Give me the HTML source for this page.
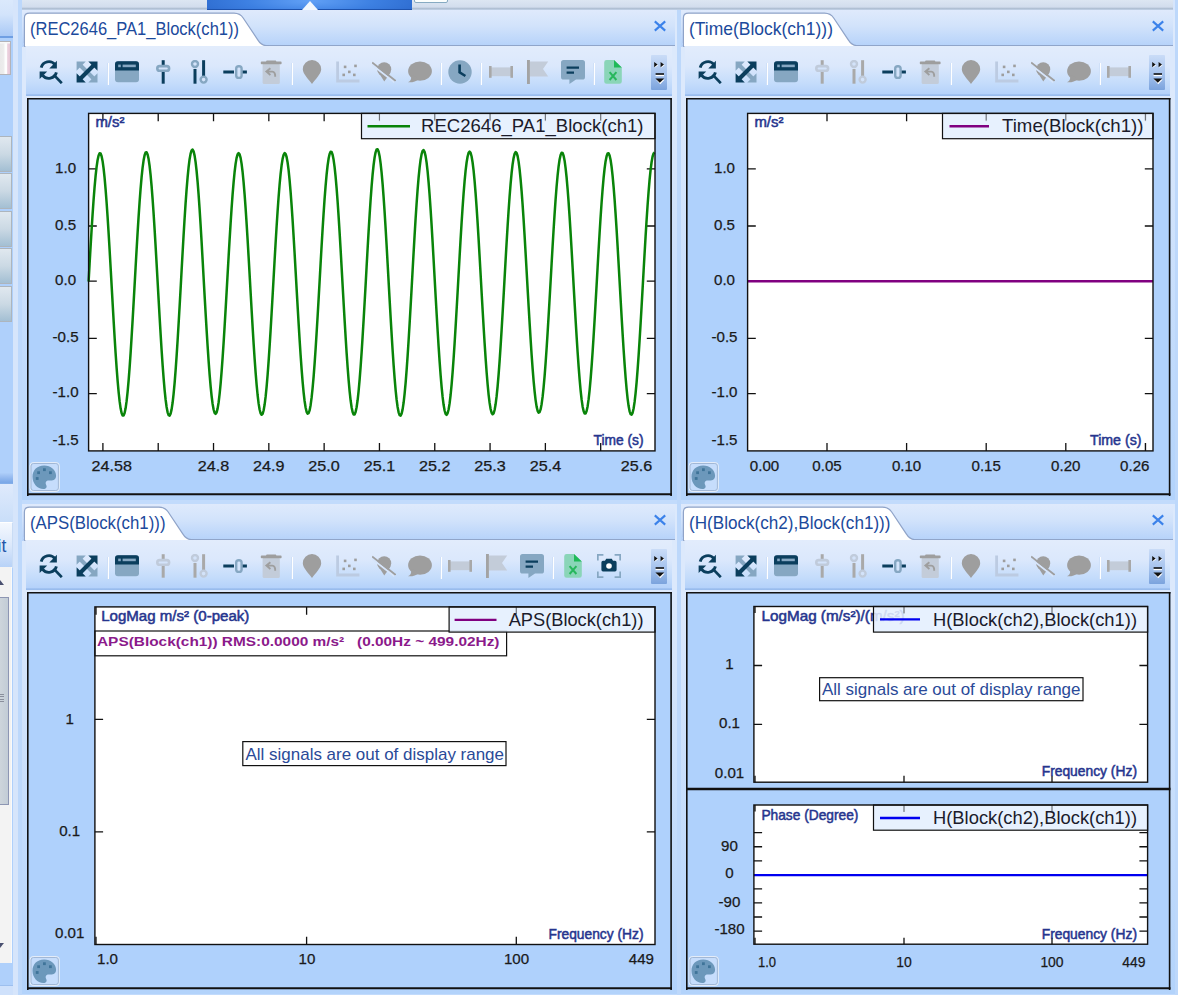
<!DOCTYPE html>
<html><head><meta charset="utf-8"><title>Signal display</title>
<style>
html,body{margin:0;padding:0}
body{width:1178px;height:995px;position:relative;overflow:hidden;background:#d6e5fb;font-family:"Liberation Sans",sans-serif}
div,svg{position:absolute}
#left{left:0;top:0;width:13px;height:995px;background:#afd0fb;overflow:hidden}
.lg1{left:0;top:0;width:13px;height:36px;background:linear-gradient(#dbe9fc,#d3e4fb 40%,#a9c9f6)}
.lline1{left:0;top:35.8px;width:13px;height:2.2px;background:#6f9fe3}
.lbox{left:-3px;top:41px;width:11.8px;height:32.4px;background:linear-gradient(90deg,#e8e8e8 0,#ececec 45%,#fdfdfd 62%,#fdfdfd 72%,#ecd3df 80%,#e6c6d6 100%);border:1.4px solid #b3b3b8;box-shadow:inset 0 1.5px 0 #f8f8f8}
.lbtn{left:-1px;width:11px;height:34px;border:1px solid #adb5bd;background:linear-gradient(#e0e8ef,#cbd9e4 50%,#a3bfd3)}
.lline2{left:0;top:472.5px;width:13px;height:11.5px;background:linear-gradient(#aecef9,#96bbf0 40%,#7ba8e7 85%,#86b0ea)}
.lg2{left:0;top:484px;width:13px;height:38px;background:linear-gradient(#dfeafc,#c9def9)}
.lhead{left:0;top:521.5px;width:11.6px;height:45.6px;border-top:1px solid #fff;background:linear-gradient(#f4f8fe,#dbe8fb 50%,#b6d1f7);border-right:1px solid #c9dcf5;color:#2456a8;font-size:17.5px;overflow:hidden}
.lhead span{position:absolute;left:-2.4px;top:13.5px}
.lscroll{left:0;top:567px;width:11px;height:396px;background:#f3f3f3;border-right:1px solid #fafafa}
.thumb{left:-2px;top:30px;width:9px;height:206px;background:linear-gradient(90deg,#cfd6dc,#c2ccd6);border:1.2px solid #8d96b3}
.grip{left:0;top:127px;width:4px;height:9px;background:repeating-linear-gradient(#8a8f9c 0 1px,transparent 1px 2.4px)}
.arru{left:-4px;top:13px;border:4.5px solid transparent;border-bottom:5px solid #4a5070;border-top:none}
.arrd{left:-4.5px;top:375.5px;border:4.5px solid transparent;border-top:5px solid #4a5070;border-bottom:none}
.lbot{left:0;top:985px;width:13px;height:10px;background:#cfe1fb;border-top:1px solid #9dbfee}
.vs{top:0;width:4px;height:995px;background:#bdd8fb}
.topbar{left:22px;top:0;width:1151px;height:10px;background:linear-gradient(#dce6f2,#d2dded 70%,#a9bace 88%,#c9d9ef)}
.bluebar{left:206.8px;top:0;width:205.4px;height:9.4px;background:radial-gradient(ellipse 62% 260% at 50% 10%,#62a1f6,#3d80e2 50%,#2a67cb 100%);border-bottom:1.2px solid #1d52ad}
.tri{left:301.5px;top:0.8px;border-left:8.7px solid transparent;border-right:8.7px solid transparent;border-bottom:9.7px solid #f3f8fe}
.smallbox{left:414px;top:-3px;width:32px;height:4px;background:#fbfefd;border:1.1px solid #86aac2;border-radius:2px}
.panel{height:494px;background:linear-gradient(to bottom,#dce9fc 0,#dce9fc 88px,#b3d3fb 487px,#b3d3fb 489.5px,#c2dbfc 489.6px)}
.tabstrip{left:0;top:0;right:2px;height:35px;background:linear-gradient(#dfeafc,#d2e3fb 45%,#b7d3fa);border-bottom:1.4px solid #90a5ca}
.tabsvg{left:0;top:0}
.tabtitle{font-size:17.8px;fill:#1c4a9c}
.closex{top:10px}
.toolbar{left:4px;top:36px;right:5px;height:50px;background:linear-gradient(#e2ecfc,#dbe8fc 40%,#c4dcfb 75%,#b5d2fa 95%,#92b7eb 98.5%,#a6c5f0 100%)}
.ic{top:14px}
.sep{top:17px;width:1px;height:22px;background:#fff;border-left:1px solid #cfe0f8}
.ovf{top:8.5px;width:16.5px;height:35px;background:linear-gradient(#cadcf7,#a9c5ee 50%,#7ba3dd);border-radius:1px}
.ovf svg{left:0;top:0}
.chart{overflow:hidden}
.tk{font-size:15.1px;fill:#1a1a1a;stroke:#1a1a1a;stroke-width:0.25px}
.leg{font-size:18.4px;fill:#1b1b2b}
.leg2{font-size:18.4px;fill:#1b1b2b}
.ax{font-size:14px;fill:#26358e;stroke:#26358e;stroke-width:0.5px}
.ax2{font-size:13.9px;fill:#26358e;stroke:#26358e;stroke-width:0.5px}
.rms{font-size:13.5px;font-weight:bold;fill:#8b1a8b;white-space:pre}
.msg{font-size:17px;fill:#2a4a98}
</style></head><body>
<div id="left"><div class="lg1"></div><div class="lline1"></div><div class="lbox"></div><div class="lbtn" style="top:135.5px"></div><div class="lbtn" style="top:173.1px"></div><div class="lbtn" style="top:210.7px"></div><div class="lbtn" style="top:248.3px"></div><div class="lbtn" style="top:285.9px"></div><div class="lline2"></div><div class="lg2"></div><div class="lhead"><span>it</span></div><div class="lscroll"><div class="thumb"></div><div class="grip"></div><div class="arru"></div><div class="arrd"></div></div><div class="lbot"></div></div>
<div class="vs" style="left:18px"></div>
<div class="vs" style="left:677px"></div>
<div class="vs" style="left:1175px"></div>
<div class="topbar"></div>
<div class="bluebar"></div><div class="tri"></div><div class="smallbox"></div>

<div class="panel" style="left:22px;top:10px;width:655px">
 <div class="tabstrip"></div>
 <svg class="tabsvg" width="247" height="37" viewBox="0 0 247 37">
  <path d="M2.4 37 L2.4 8 Q2.4 3.2 7.5 3.2 L212 3.2 Q218.2 3.4 221.2 8 L235.6 29.6 Q239 35.2 244 35.6 L247 35.6 L247 37 Z" fill="#fff" stroke="#8fa3c8" stroke-width="1.2"/>
  <rect x="0" y="33" width="1.8" height="4" fill="#b9d4fa"/>
  <text x="8" y="24.8" class="tabtitle" textLength="209" lengthAdjust="spacingAndGlyphs">(REC2646_PA1_Block(ch1))</text>
 </svg>
 <svg class="closex" style="left:632px" width="12" height="12" viewBox="0 0 12 12"><path d="M0.8 1.4 L11.2 10.6 M11.2 1.4 L0.8 10.6" stroke="#3b82ea" stroke-width="2.1"/></svg>
 <div class="toolbar"><svg class="ic" style="left:12.5px" width="24" height="24" viewBox="0 0 24 24">
<path d="M2.2 7.6 A7.9 7.9 0 0 1 16 4.6" fill="none" stroke="#0b3e5d" stroke-width="2.9"/>
<path d="M17.9 0.7 L17.9 8.5 L10.3 8.5 Z" fill="#0b3e5d"/>
<path d="M17.4 12.4 A7.9 7.9 0 0 1 3.6 15.4" fill="none" stroke="#0b3e5d" stroke-width="2.9"/>
<path d="M0.6 19 L0.6 11.5 L8.2 11.5 Z" fill="#0b3e5d"/>
<path d="M14.6 14.6 L22.8 23.2" stroke="#0b3e5d" stroke-width="2.7" fill="none"/></svg>
<svg class="ic" style="left:48.5px" width="24" height="24" viewBox="0 0 24 24">
<path d="M1.6 1.6 L10.8 1.6 L1.6 10.8 Z M22.5 22.4 L13.3 22.4 L22.5 13.2 Z" fill="#86a7c2"/>
<path d="M5 5 L19 19" stroke="#86a7c2" stroke-width="4"/>
<path d="M22.5 1.6 L13.3 1.6 L22.5 10.8 Z M1.6 22.4 L10.8 22.4 L1.6 13.2 Z" fill="#0b3e5d"/>
<path d="M19 5 L5 19" stroke="#0b3e5d" stroke-width="4"/></svg>
<div class="sep" style="left:80.7px"></div>
<svg class="ic" style="left:89.0px" width="24" height="24" viewBox="0 0 24 24">
<rect x="0" y="1.3" width="24" height="21" rx="3" fill="#86a7c2"/>
<path d="M0 10.5 L0 4.3 A3 3 0 0 1 3 1.3 L21 1.3 A3 3 0 0 1 24 4.3 L24 10.5 Z" fill="#0b3e5d"/>
<rect x="3.2" y="4.6" width="2.6" height="2.6" fill="#86a7c2"/>
<rect x="7.6" y="4.6" width="13.2" height="2.6" fill="#86a7c2"/></svg>
<svg class="ic" style="left:125.0px" width="24" height="24" viewBox="0 0 24 24">
<path d="M12.2 0.2 L12.2 23.7" stroke="#0b3e5d" stroke-width="3"/>
<rect x="6.3" y="6.1" width="11.8" height="4.6" rx="2.3" fill="#d3e3fa" stroke="#86a7c2" stroke-width="2.6"/></svg>
<svg class="ic" style="left:161.0px" width="24" height="24" viewBox="0 0 24 24">
<path d="M8 9 L8 23.7" stroke="#0b3e5d" stroke-width="3"/>
<circle cx="8" cy="4" r="3" fill="#d3e3fa" stroke="#86a7c2" stroke-width="2.4"/>
<path d="M16.6 0.2 L16.6 16" stroke="#0b3e5d" stroke-width="3"/>
<circle cx="16.6" cy="19.6" r="3" fill="#d3e3fa" stroke="#86a7c2" stroke-width="2.4"/></svg>
<svg class="ic" style="left:197.0px" width="24" height="24" viewBox="0 0 24 24">
<path d="M0.3 12 L11 12 M19 12 L23.9 12" stroke="#0b3e5d" stroke-width="3"/>
<rect x="13.2" y="6.3" width="5.4" height="11.6" rx="2.5" fill="#d3e3fa" stroke="#86a7c2" stroke-width="2.4"/></svg>
<svg class="ic" style="left:233.0px" width="24" height="24" viewBox="0 0 24 24">
<rect x="3.6" y="3.4" width="17.2" height="20.5" rx="1.5" fill="#c3ccd9"/>
<path d="M7.6 0.4 L16.8 0.4 L17.6 2.2 L6.8 2.2 Z" fill="#9e9e9e"/>
<rect x="1.8" y="1.6" width="20.8" height="2.7" rx="0.8" fill="#9e9e9e"/>
<path d="M11.4 8.2 L7.4 11.6 L11.4 15 M7.6 11.6 L13.2 11.6 Q16.4 11.8 16.2 16.8" fill="none" stroke="#9e9e9e" stroke-width="1.9"/></svg>
<div class="sep" style="left:265.2px"></div>
<svg class="ic" style="left:273.5px" width="24" height="24" viewBox="0 0 24 24">
<path d="M12 24 C9 19.5 2.8 14 2.8 9.2 A9.2 9.2 0 0 1 21.2 9.2 C21.2 14 15 19.5 12 24 Z" fill="#9e9e9e"/></svg>
<svg class="ic" style="left:309.5px" width="24" height="24" viewBox="0 0 24 24">
<path d="M1.6 1.6 L1.6 21 L23.4 21" fill="none" stroke="#bccbe2" stroke-width="2.8"/>
<rect x="7.8" y="5.6" width="2.6" height="2.6" fill="#9e9e9e"/>
<rect x="18.2" y="4.6" width="2.6" height="2.6" fill="#9e9e9e"/>
<rect x="12" y="10.6" width="2.6" height="2.6" fill="#9e9e9e"/>
<rect x="6.4" y="13.6" width="2.6" height="2.6" fill="#9e9e9e"/>
<rect x="17" y="13.6" width="2.6" height="2.6" fill="#9e9e9e"/></svg>
<svg class="ic" style="left:345.5px" width="24" height="24" viewBox="0 0 24 24">
<circle cx="12.2" cy="9.3" r="7" fill="#9e9e9e"/>
<path d="M5.3 10.6 L12.3 21.6 L18.6 12.6 Z" fill="#9e9e9e"/>
<path d="M-1 3.9 L22.4 22.2" stroke="#d6e5fb" stroke-width="1.9"/>
<path d="M0.1 2.5 L23.5 20.8" stroke="#9e9e9e" stroke-width="1.8"/></svg>
<svg class="ic" style="left:381.5px" width="24" height="24" viewBox="0 0 24 24">
<ellipse cx="12" cy="11.1" rx="11.9" ry="9.7" fill="#9e9e9e"/>
<path d="M3.6 15 Q3.8 20.4 0 22.3 Q6.6 22.8 11 19 Z" fill="#9e9e9e"/></svg>
<div class="sep" style="left:413.7px"></div>
<svg class="ic" style="left:422.0px" width="24" height="24" viewBox="0 0 24 24">
<circle cx="12" cy="12" r="11.7" fill="#86a7c2"/>
<path d="M11.6 4.6 L11.6 12.4 L17.4 16" fill="none" stroke="#0b3e5d" stroke-width="2.6"/></svg>
<div class="sep" style="left:454.2px"></div>
<svg class="ic" style="left:462.5px" width="24" height="24" viewBox="0 0 24 24">
<rect x="1" y="7.4" width="22" height="8.8" fill="#c3ccd9"/>
<rect x="0" y="6" width="2.6" height="11.8" fill="#a8a8a8"/>
<rect x="21.4" y="6" width="2.6" height="11.8" fill="#a8a8a8"/></svg>
<svg class="ic" style="left:498.5px" width="24" height="24" viewBox="0 0 24 24">
<path d="M4.6 1.6 L23.2 1.6 L18 9 L23.2 16.4 L4.6 16.4 Z" fill="#c3ccd9"/>
<rect x="2" y="0" width="2.9" height="24" fill="#a3a3a3"/></svg>
<svg class="ic" style="left:534.5px" width="24" height="24" viewBox="0 0 24 24">
<path d="M2.6 0 L21.4 0 A2.6 2.6 0 0 1 24 2.6 L24 17 A2.6 2.6 0 0 1 21.4 19.6 L15 19.6 L8.4 24 L8.4 19.6 L2.6 19.6 A2.6 2.6 0 0 1 0 17 L0 2.6 A2.6 2.6 0 0 1 2.6 0 Z" fill="#86a7c2"/>
<path d="M5.6 7.6 L18 7.6 M5.6 12.6 L13 12.6" stroke="#0b3e5d" stroke-width="2.2"/></svg>
<div class="sep" style="left:566.7px"></div>
<svg class="ic" style="left:575.0px" width="24" height="24" viewBox="0 0 24 24">
<path d="M5.6 0 L13 0 L20.8 7.6 L20.8 21.4 A2.4 2.4 0 0 1 18.4 23.8 L5.6 23.8 A2.4 2.4 0 0 1 3.2 21.4 L3.2 2.4 A2.4 2.4 0 0 1 5.6 0 Z" fill="#8ad5b8"/>
<path d="M13 0 L20.8 7.6 L13 7.6 Z" fill="#1fba58"/>
<path d="M8.6 12.2 L15.4 20 M15.4 12.2 L8.6 20" stroke="#27b75c" stroke-width="2"/></svg>
<div class="ovf" style="left:624.7px"><svg width="17" height="36" viewBox="0 0 17 36">
<path d="M3.8 7.6 L7.2 10.2 L3.8 12.8 Z M10.2 7.6 L13.6 10.2 L10.2 12.8 Z" fill="#fff"/><path d="M3.2 7 L6.6 9.6 L3.2 12.2 Z M9.6 7 L13 9.6 L9.6 12.2 Z" fill="#111"/>
<path d="M4.6 20.4 L13 20.4" stroke="#fff" stroke-width="1.6"/>
<path d="M4.6 19 L13 19" stroke="#111" stroke-width="1.6"/>
<path d="M4.9 24.6 L13.7 24.6 L9.3 29.2 Z" fill="#fff"/>
<path d="M4.4 23.4 L13.2 23.4 L8.8 27.8 Z" fill="#111"/>
</svg></div></div>
 <svg class="chart" style="left:5px;top:88px" width="645" height="398" viewBox="0 0 645 398">
<rect x="0" y="0" width="645" height="398" fill="#afd1fc"/>
<rect x="61.6" y="15.4" width="566.4" height="337.5" fill="#fff"/>
<path d="M61.6 70.9 h8.2 M628 70.9 h-8.2 M61.6 128.0 h8.2 M628 128.0 h-8.2 M61.6 183.2 h8.2 M628 183.2 h-8.2 M61.6 240.4 h8.2 M628 240.4 h-8.2 M61.6 295.6 h8.2 M628 295.6 h-8.2 M75.9 15.4 v7.8 M75.9 352.9 v-7.8 M131.21 15.4 v7.8 M131.21 352.9 v-7.8 M186.52 15.4 v7.8 M186.52 352.9 v-7.8 M241.83 15.4 v7.8 M241.83 352.9 v-7.8 M297.14 15.4 v7.8 M297.14 352.9 v-7.8 M352.45000000000005 15.4 v7.8 M352.45000000000005 352.9 v-7.8 M407.76 15.4 v7.8 M407.76 352.9 v-7.8 M463.07000000000005 15.4 v7.8 M463.07000000000005 352.9 v-7.8 M518.38 15.4 v7.8 M518.38 352.9 v-7.8 M573.69 15.4 v7.8 M573.69 352.9 v-7.8" stroke="#111" stroke-width="1.3" fill="none"/>
<path d="M61.6 183.5 L62.6 165.8 L63.6 148.4 L64.6 131.7 L65.6 116.1 L66.6 101.7 L67.6 88.9 L68.6 77.9 L69.6 68.9 L70.6 62.0 L71.6 57.5 L72.6 55.3 L73.6 55.5 L74.6 58.2 L75.6 63.2 L76.6 70.5 L77.6 79.9 L78.6 91.3 L79.6 104.5 L80.6 119.1 L81.6 135.0 L82.6 151.8 L83.6 169.3 L84.6 187.1 L85.6 204.9 L86.6 222.4 L87.6 239.2 L88.6 255.1 L89.6 269.6 L90.6 282.7 L91.6 293.9 L92.6 303.2 L93.6 310.3 L94.6 315.1 L95.6 317.5 L96.6 317.5 L97.6 315.1 L98.6 310.3 L99.6 303.2 L100.6 293.9 L101.6 282.7 L102.6 269.6 L103.6 255.1 L104.6 239.2 L105.6 222.4 L106.6 204.9 L107.6 187.1 L108.6 169.2 L109.6 151.6 L110.6 134.6 L111.6 118.6 L112.6 103.8 L113.6 90.6 L114.6 79.1 L115.6 69.6 L116.6 62.3 L117.6 57.2 L118.6 54.5 L119.6 54.3 L120.6 56.5 L121.6 61.1 L122.6 68.0 L123.6 77.1 L124.6 88.2 L125.6 101.1 L126.6 115.5 L127.6 131.3 L128.6 148.1 L129.6 165.6 L130.6 183.5 L131.6 201.4 L132.6 219.0 L133.6 235.9 L134.6 252.0 L135.6 266.8 L136.6 280.2 L137.6 291.8 L138.6 301.5 L139.6 309.0 L140.6 314.3 L141.6 317.2 L142.6 317.7 L143.6 315.7 L144.6 311.4 L145.6 304.8 L146.6 295.9 L147.6 285.1 L148.6 272.4 L149.6 258.1 L150.6 242.5 L151.6 225.8 L152.6 208.5 L153.6 190.7 L154.6 172.5 L155.6 154.5 L156.6 137.0 L157.6 120.5 L158.6 105.2 L159.6 91.3 L160.6 79.3 L161.6 69.2 L162.6 61.2 L163.6 55.6 L164.6 52.4 L165.6 51.6 L166.6 53.4 L167.6 57.6 L168.6 64.1 L169.6 73.0 L170.6 83.9 L171.6 96.7 L172.6 111.1 L173.6 127.0 L174.6 143.9 L175.6 161.6 L176.6 179.8 L177.6 197.6 L178.6 215.0 L179.6 231.9 L180.6 247.9 L181.6 262.8 L182.6 276.3 L183.6 288.1 L184.6 298.0 L185.6 305.9 L186.6 311.5 L187.6 314.8 L188.6 315.8 L189.6 314.4 L190.6 310.6 L191.6 304.5 L192.6 296.2 L193.6 285.9 L194.6 273.7 L195.6 259.9 L196.6 244.8 L197.6 228.6 L198.6 211.6 L199.6 194.1 L200.6 176.4 L201.6 158.8 L202.6 141.6 L203.6 125.3 L204.6 110.2 L205.6 96.4 L206.6 84.3 L207.6 74.0 L208.6 65.9 L209.6 59.9 L210.6 56.3 L211.6 55.1 L212.6 56.3 L213.6 59.9 L214.6 65.9 L215.6 74.0 L216.6 84.3 L217.6 96.4 L218.6 110.2 L219.6 125.3 L220.6 141.6 L221.6 158.8 L222.6 176.4 L223.6 194.2 L224.6 211.8 L225.6 228.9 L226.6 245.3 L227.6 260.5 L228.6 274.4 L229.6 286.6 L230.6 297.0 L231.6 305.4 L232.6 311.5 L233.6 315.3 L234.6 316.8 L235.6 315.8 L236.6 312.5 L237.6 306.8 L238.6 298.9 L239.6 288.9 L240.6 277.0 L241.6 263.4 L242.6 248.4 L243.6 232.3 L244.6 215.3 L245.6 197.7 L246.6 180.0 L247.6 162.3 L248.6 145.0 L249.6 128.5 L250.6 113.1 L251.6 99.0 L252.6 86.5 L253.6 75.9 L254.6 67.3 L255.6 60.9 L256.6 56.8 L257.6 55.1 L258.6 55.9 L259.6 59.0 L260.6 64.5 L261.6 72.2 L262.6 82.1 L263.6 93.8 L264.6 107.3 L265.6 122.2 L266.6 138.3 L267.6 155.3 L268.6 172.9 L269.6 190.6 L270.6 208.1 L271.6 225.2 L272.6 241.6 L273.6 257.0 L274.6 271.1 L275.6 283.6 L276.6 294.3 L277.6 303.0 L278.6 309.5 L279.6 313.8 L280.6 315.7 L281.6 315.2 L282.6 312.4 L283.6 307.2 L284.6 299.7 L285.6 290.2 L286.6 278.8 L287.6 265.6 L288.6 251.0 L289.6 235.2 L290.6 218.5 L291.6 201.1 L292.6 183.5 L293.6 165.5 L294.6 148.0 L295.6 131.1 L296.6 115.3 L297.6 100.7 L298.6 87.8 L299.6 76.6 L300.6 67.5 L301.6 60.6 L302.6 56.0 L303.6 53.8 L304.6 54.0 L305.6 56.7 L306.6 61.8 L307.6 69.2 L308.6 78.7 L309.6 90.2 L310.6 103.5 L311.6 118.3 L312.6 134.4 L313.6 151.4 L314.6 169.1 L315.6 187.1 L316.6 204.8 L317.6 222.1 L318.6 238.8 L319.6 254.6 L320.6 269.0 L321.6 281.9 L322.6 293.1 L323.6 302.3 L324.6 309.3 L325.6 314.1 L326.6 316.5 L327.6 316.5 L328.6 314.1 L329.6 309.3 L330.6 302.3 L331.6 293.1 L332.6 281.9 L333.6 269.0 L334.6 254.6 L335.6 238.8 L336.6 222.1 L337.6 204.8 L338.6 187.1 L339.6 168.8 L340.6 150.8 L341.6 133.4 L342.6 117.1 L343.6 102.0 L344.6 88.4 L345.6 76.7 L346.6 67.0 L347.6 59.5 L348.6 54.3 L349.6 51.5 L350.6 51.3 L351.6 53.5 L352.6 58.2 L353.6 65.3 L354.6 74.6 L355.6 85.9 L356.6 99.1 L357.6 113.9 L358.6 130.1 L359.6 147.3 L360.6 165.2 L361.6 183.4 L362.6 201.4 L363.6 219.0 L364.6 235.9 L365.6 252.0 L366.6 266.8 L367.6 280.2 L368.6 291.8 L369.6 301.5 L370.6 309.0 L371.6 314.3 L372.6 317.2 L373.6 317.7 L374.6 315.7 L375.6 311.4 L376.6 304.8 L377.6 295.9 L378.6 285.1 L379.6 272.4 L380.6 258.1 L381.6 242.5 L382.6 225.8 L383.6 208.5 L384.6 190.7 L385.6 172.5 L386.6 154.6 L387.6 137.2 L388.6 120.7 L389.6 105.5 L390.6 91.7 L391.6 79.7 L392.6 69.6 L393.6 61.7 L394.6 56.1 L395.6 52.9 L396.6 52.1 L397.6 53.9 L398.6 58.1 L399.6 64.6 L400.6 73.4 L401.6 84.3 L402.6 97.0 L403.6 111.4 L404.6 127.2 L405.6 144.1 L406.6 161.7 L407.6 179.8 L408.6 197.7 L409.6 215.3 L410.6 232.3 L411.6 248.4 L412.6 263.4 L413.6 277.0 L414.6 288.9 L415.6 298.9 L416.6 306.8 L417.6 312.5 L418.6 315.8 L419.6 316.8 L420.6 315.3 L421.6 311.5 L422.6 305.4 L423.6 297.0 L424.6 286.6 L425.6 274.4 L426.6 260.5 L427.6 245.3 L428.6 228.9 L429.6 211.8 L430.6 194.2 L431.6 176.3 L432.6 158.5 L433.6 141.1 L434.6 124.6 L435.6 109.3 L436.6 95.4 L437.6 83.1 L438.6 72.7 L439.6 64.5 L440.6 58.5 L441.6 54.8 L442.6 53.6 L443.6 54.8 L444.6 58.5 L445.6 64.5 L446.6 72.7 L447.6 83.1 L448.6 95.4 L449.6 109.3 L450.6 124.6 L451.6 141.1 L452.6 158.5 L453.6 176.3 L454.6 194.2 L455.6 211.7 L456.6 228.8 L457.6 245.0 L458.6 260.2 L459.6 274.0 L460.6 286.2 L461.6 296.6 L462.6 304.9 L463.6 311.0 L464.6 314.8 L465.6 316.3 L466.6 315.3 L467.6 312.0 L468.6 306.3 L469.6 298.4 L470.6 288.5 L471.6 276.6 L472.6 263.1 L473.6 248.2 L474.6 232.1 L475.6 215.1 L476.6 197.7 L477.6 179.9 L478.6 162.1 L479.6 144.7 L480.6 128.1 L481.6 112.5 L482.6 98.3 L483.6 85.8 L484.6 75.1 L485.6 66.4 L486.6 60.0 L487.6 55.9 L488.6 54.1 L489.6 54.9 L490.6 58.0 L491.6 63.6 L492.6 71.4 L493.6 81.3 L494.6 93.1 L495.6 106.7 L496.6 121.7 L497.6 137.9 L498.6 155.1 L499.6 172.7 L500.6 190.6 L501.6 208.0 L502.6 224.9 L503.6 241.2 L504.6 256.5 L505.6 270.4 L506.6 282.8 L507.6 293.4 L508.6 302.1 L509.6 308.6 L510.6 312.8 L511.6 314.7 L512.6 314.2 L513.6 311.4 L514.6 306.2 L515.6 298.9 L516.6 289.4 L517.6 278.1 L518.6 265.0 L519.6 250.5 L520.6 234.8 L521.6 218.2 L522.6 201.0 L523.6 183.5 L524.6 165.7 L525.6 148.3 L526.6 131.5 L527.6 115.8 L528.6 101.4 L529.6 88.5 L530.6 77.5 L531.6 68.4 L532.6 61.5 L533.6 57.0 L534.6 54.8 L535.6 55.0 L536.6 57.7 L537.6 62.7 L538.6 70.1 L539.6 79.5 L540.6 91.0 L541.6 104.1 L542.6 118.9 L543.6 134.8 L544.6 151.7 L545.6 169.2 L546.6 187.1 L547.6 204.6 L548.6 221.9 L549.6 238.4 L550.6 254.0 L551.6 268.4 L552.6 281.2 L553.6 292.3 L554.6 301.4 L555.6 308.4 L556.6 313.1 L557.6 315.5 L558.6 315.5 L559.6 313.1 L560.6 308.4 L561.6 301.4 L562.6 292.3 L563.6 281.2 L564.6 268.4 L565.6 254.0 L566.6 238.4 L567.6 221.9 L568.6 204.6 L569.6 187.1 L570.6 169.3 L571.6 151.8 L572.6 135.0 L573.6 119.1 L574.6 104.5 L575.6 91.3 L576.6 79.9 L577.6 70.5 L578.6 63.2 L579.6 58.2 L580.6 55.5 L581.6 55.3 L582.6 57.5 L583.6 62.0 L584.6 68.9 L585.6 77.9 L586.6 88.9 L587.6 101.7 L588.6 116.1 L589.6 131.7 L590.6 148.4 L591.6 165.8 L592.6 183.5 L593.6 201.3 L594.6 218.7 L595.6 235.6 L596.6 251.5 L597.6 266.2 L598.6 279.5 L599.6 291.0 L600.6 300.6 L601.6 308.1 L602.6 313.3 L603.6 316.2 L604.6 316.7 L605.6 314.8 L606.6 310.5 L607.6 303.9 L608.6 295.1 L609.6 284.3 L610.6 271.7 L611.6 257.6 L612.6 242.1 L613.6 225.5 L614.6 208.3 L615.6 190.6 L616.6 172.8 L617.6 155.2 L618.6 138.1 L619.6 122.0 L620.6 107.0 L621.6 93.5 L622.6 81.7 L623.6 71.8 L624.6 64.0 L625.6 58.5 L626.6 55.4 L627.6 54.6" fill="none" stroke="#098409" stroke-width="2.5" stroke-linejoin="round"/>
<rect x="334.5" y="15.4" width="293.5" height="25.3" fill="#e4effe" fill-opacity="0.88" stroke="#111" stroke-width="1.2"/><path d="M352.45000000000005 15.4 v7 M407.76 15.4 v7 M463.07000000000005 15.4 v7 M518.38 15.4 v7 M573.69 15.4 v7 " stroke="#222" stroke-width="1.1" opacity="0.55"/><path d="M340.5 28.200000000000003 L383 28.200000000000003" stroke="#098409" stroke-width="2.4"/><text x="394" y="33.9" class="leg" textLength="222.5" lengthAdjust="spacingAndGlyphs">REC2646_PA1_Block(ch1)</text>
<rect x="61.6" y="15.4" width="566.4" height="337.5" fill="none" stroke="#111" stroke-width="1.4"/>
<text x="38.6" y="74.5" class="tk" text-anchor="middle">1.0</text>
<text x="38.6" y="131.6" class="tk" text-anchor="middle">0.5</text>
<text x="38.6" y="186.8" class="tk" text-anchor="middle">0.0</text>
<text x="38.6" y="244.0" class="tk" text-anchor="middle">-0.5</text>
<text x="38.6" y="299.2" class="tk" text-anchor="middle">-1.0</text>
<text x="38.6" y="346.9" class="tk" text-anchor="middle">-1.5</text>
<text x="64.5" y="372.9" class="tk" text-anchor="start" textLength="40.4" lengthAdjust="spacingAndGlyphs">24.58</text>
<text x="186.5" y="372.9" class="tk" text-anchor="middle" textLength="31.5" lengthAdjust="spacingAndGlyphs">24.8</text>
<text x="241.8" y="372.9" class="tk" text-anchor="middle" textLength="31.5" lengthAdjust="spacingAndGlyphs">24.9</text>
<text x="297.1" y="372.9" class="tk" text-anchor="middle" textLength="31.5" lengthAdjust="spacingAndGlyphs">25.0</text>
<text x="352.4" y="372.9" class="tk" text-anchor="middle" textLength="31.5" lengthAdjust="spacingAndGlyphs">25.1</text>
<text x="407.7" y="372.9" class="tk" text-anchor="middle" textLength="31.5" lengthAdjust="spacingAndGlyphs">25.2</text>
<text x="463.1" y="372.9" class="tk" text-anchor="middle" textLength="31.5" lengthAdjust="spacingAndGlyphs">25.3</text>
<text x="518.4" y="372.9" class="tk" text-anchor="middle" textLength="31.5" lengthAdjust="spacingAndGlyphs">25.4</text>
<text x="625.2" y="372.9" class="tk" text-anchor="end" textLength="31.5" lengthAdjust="spacingAndGlyphs">25.6</text>
<text x="68.4" y="29.200000000000003" class="ax" textLength="29" lengthAdjust="spacingAndGlyphs">m/s²</text>
<text x="616.5" y="347.29999999999995" class="ax" text-anchor="end" textLength="50" lengthAdjust="spacingAndGlyphs">Time (s)</text>
<g transform="translate(2.6,364.1)"><rect x="0.5" y="0.5" width="29.2" height="28.8" rx="3" fill="#c6ddfc" stroke="#e8eff8" stroke-width="1"/>
<rect x="1.4" y="1.4" width="27.4" height="27" rx="2.6" fill="none" stroke="#9db3d1" stroke-width="0.9"/>
<path d="M14.6 3.4 C7 3.4 2.9 8.6 2.9 14.6 C2.9 21.4 7.8 26.8 13.8 26.8 C16.6 26.8 17.7 24.8 16.6 22.8 C15.3 20.4 16.6 18.3 19.2 18.3 L22.2 18.3 C25.2 18.3 26.5 16.3 26.5 13.7 C26.5 7.8 21.1 3.4 14.6 3.4 Z" fill="#6c98bb"/>
<rect x="6.2" y="15" width="2.8" height="2.8" fill="#3f7499"/><rect x="7.6" y="9.2" width="2.8" height="2.8" fill="#3f7499"/><rect x="13.4" y="6.2" width="2.8" height="2.8" fill="#3f7499"/><rect x="19.4" y="9.2" width="2.8" height="2.8" fill="#3f7499"/>
</g>
<path d="M0.8 0 V398 M644.1 0 V398" stroke="#111" stroke-width="1.6"/><path d="M0 0.8 H645" stroke="#111" stroke-width="1.5"/><path d="M0 396.25 H645" stroke="#111" stroke-width="1.8"/>
</svg>
</div>

<div class="panel" style="left:681px;top:10px;width:494px">
 <div class="tabstrip"></div>
 <svg class="tabsvg" width="178.5" height="37" viewBox="0 0 178.5 37">
  <path d="M2.4 37 L2.4 8 Q2.4 3.2 7.5 3.2 L143.5 3.2 Q149.7 3.4 152.7 8 L167.1 29.6 Q170.5 35.2 175.5 35.6 L178.5 35.6 L178.5 37 Z" fill="#fff" stroke="#8fa3c8" stroke-width="1.2"/>
  <rect x="0" y="33" width="1.8" height="4" fill="#b9d4fa"/>
  <text x="8" y="24.8" class="tabtitle" textLength="144" lengthAdjust="spacingAndGlyphs">(Time(Block(ch1)))</text>
 </svg>
 <svg class="closex" style="left:471px" width="12" height="12" viewBox="0 0 12 12"><path d="M0.8 1.4 L11.2 10.6 M11.2 1.4 L0.8 10.6" stroke="#3b82ea" stroke-width="2.1"/></svg>
 <div class="toolbar"><svg class="ic" style="left:12.5px" width="24" height="24" viewBox="0 0 24 24">
<path d="M2.2 7.6 A7.9 7.9 0 0 1 16 4.6" fill="none" stroke="#0b3e5d" stroke-width="2.9"/>
<path d="M17.9 0.7 L17.9 8.5 L10.3 8.5 Z" fill="#0b3e5d"/>
<path d="M17.4 12.4 A7.9 7.9 0 0 1 3.6 15.4" fill="none" stroke="#0b3e5d" stroke-width="2.9"/>
<path d="M0.6 19 L0.6 11.5 L8.2 11.5 Z" fill="#0b3e5d"/>
<path d="M14.6 14.6 L22.8 23.2" stroke="#0b3e5d" stroke-width="2.7" fill="none"/></svg>
<svg class="ic" style="left:48.5px" width="24" height="24" viewBox="0 0 24 24">
<path d="M1.6 1.6 L10.8 1.6 L1.6 10.8 Z M22.5 22.4 L13.3 22.4 L22.5 13.2 Z" fill="#86a7c2"/>
<path d="M5 5 L19 19" stroke="#86a7c2" stroke-width="4"/>
<path d="M22.5 1.6 L13.3 1.6 L22.5 10.8 Z M1.6 22.4 L10.8 22.4 L1.6 13.2 Z" fill="#0b3e5d"/>
<path d="M19 5 L5 19" stroke="#0b3e5d" stroke-width="4"/></svg>
<div class="sep" style="left:80.7px"></div>
<svg class="ic" style="left:89.0px" width="24" height="24" viewBox="0 0 24 24">
<rect x="0" y="1.3" width="24" height="21" rx="3" fill="#86a7c2"/>
<path d="M0 10.5 L0 4.3 A3 3 0 0 1 3 1.3 L21 1.3 A3 3 0 0 1 24 4.3 L24 10.5 Z" fill="#0b3e5d"/>
<rect x="3.2" y="4.6" width="2.6" height="2.6" fill="#86a7c2"/>
<rect x="7.6" y="4.6" width="13.2" height="2.6" fill="#86a7c2"/></svg>
<svg class="ic" style="left:125.0px" width="24" height="24" viewBox="0 0 24 24">
<path d="M12.2 0.2 L12.2 23.7" stroke="#a9a9a9" stroke-width="3"/>
<rect x="6.3" y="6.1" width="11.8" height="4.6" rx="2.3" fill="#d3e3fa" stroke="#c0cbdb" stroke-width="2.6"/></svg>
<svg class="ic" style="left:161.0px" width="24" height="24" viewBox="0 0 24 24">
<path d="M8 9 L8 23.7" stroke="#a9a9a9" stroke-width="3"/>
<circle cx="8" cy="4" r="3" fill="#d3e3fa" stroke="#c0cbdb" stroke-width="2.4"/>
<path d="M16.6 0.2 L16.6 16" stroke="#a9a9a9" stroke-width="3"/>
<circle cx="16.6" cy="19.6" r="3" fill="#d3e3fa" stroke="#c0cbdb" stroke-width="2.4"/></svg>
<svg class="ic" style="left:197.0px" width="24" height="24" viewBox="0 0 24 24">
<path d="M0.3 12 L11 12 M19 12 L23.9 12" stroke="#0b3e5d" stroke-width="3"/>
<rect x="13.2" y="6.3" width="5.4" height="11.6" rx="2.5" fill="#d3e3fa" stroke="#86a7c2" stroke-width="2.4"/></svg>
<svg class="ic" style="left:233.0px" width="24" height="24" viewBox="0 0 24 24">
<rect x="3.6" y="3.4" width="17.2" height="20.5" rx="1.5" fill="#c3ccd9"/>
<path d="M7.6 0.4 L16.8 0.4 L17.6 2.2 L6.8 2.2 Z" fill="#9e9e9e"/>
<rect x="1.8" y="1.6" width="20.8" height="2.7" rx="0.8" fill="#9e9e9e"/>
<path d="M11.4 8.2 L7.4 11.6 L11.4 15 M7.6 11.6 L13.2 11.6 Q16.4 11.8 16.2 16.8" fill="none" stroke="#9e9e9e" stroke-width="1.9"/></svg>
<div class="sep" style="left:265.2px"></div>
<svg class="ic" style="left:273.5px" width="24" height="24" viewBox="0 0 24 24">
<path d="M12 24 C9 19.5 2.8 14 2.8 9.2 A9.2 9.2 0 0 1 21.2 9.2 C21.2 14 15 19.5 12 24 Z" fill="#9e9e9e"/></svg>
<svg class="ic" style="left:309.5px" width="24" height="24" viewBox="0 0 24 24">
<path d="M1.6 1.6 L1.6 21 L23.4 21" fill="none" stroke="#bccbe2" stroke-width="2.8"/>
<rect x="7.8" y="5.6" width="2.6" height="2.6" fill="#9e9e9e"/>
<rect x="18.2" y="4.6" width="2.6" height="2.6" fill="#9e9e9e"/>
<rect x="12" y="10.6" width="2.6" height="2.6" fill="#9e9e9e"/>
<rect x="6.4" y="13.6" width="2.6" height="2.6" fill="#9e9e9e"/>
<rect x="17" y="13.6" width="2.6" height="2.6" fill="#9e9e9e"/></svg>
<svg class="ic" style="left:345.5px" width="24" height="24" viewBox="0 0 24 24">
<circle cx="12.2" cy="9.3" r="7" fill="#9e9e9e"/>
<path d="M5.3 10.6 L12.3 21.6 L18.6 12.6 Z" fill="#9e9e9e"/>
<path d="M-1 3.9 L22.4 22.2" stroke="#d6e5fb" stroke-width="1.9"/>
<path d="M0.1 2.5 L23.5 20.8" stroke="#9e9e9e" stroke-width="1.8"/></svg>
<svg class="ic" style="left:381.5px" width="24" height="24" viewBox="0 0 24 24">
<ellipse cx="12" cy="11.1" rx="11.9" ry="9.7" fill="#9e9e9e"/>
<path d="M3.6 15 Q3.8 20.4 0 22.3 Q6.6 22.8 11 19 Z" fill="#9e9e9e"/></svg>
<div class="sep" style="left:413.7px"></div>
<svg class="ic" style="left:422.0px" width="24" height="24" viewBox="0 0 24 24">
<rect x="1" y="7.4" width="22" height="8.8" fill="#c3ccd9"/>
<rect x="0" y="6" width="2.6" height="11.8" fill="#a8a8a8"/>
<rect x="21.4" y="6" width="2.6" height="11.8" fill="#a8a8a8"/></svg>
<div class="ovf" style="left:463.7px"><svg width="17" height="36" viewBox="0 0 17 36">
<path d="M3.8 7.6 L7.2 10.2 L3.8 12.8 Z M10.2 7.6 L13.6 10.2 L10.2 12.8 Z" fill="#fff"/><path d="M3.2 7 L6.6 9.6 L3.2 12.2 Z M9.6 7 L13 9.6 L9.6 12.2 Z" fill="#111"/>
<path d="M4.6 20.4 L13 20.4" stroke="#fff" stroke-width="1.6"/>
<path d="M4.6 19 L13 19" stroke="#111" stroke-width="1.6"/>
<path d="M4.9 24.6 L13.7 24.6 L9.3 29.2 Z" fill="#fff"/>
<path d="M4.4 23.4 L13.2 23.4 L8.8 27.8 Z" fill="#111"/>
</svg></div></div>
 <svg class="chart" style="left:5px;top:88px" width="484.5" height="398" viewBox="0 0 484.5 398">
<rect x="0" y="0" width="484.5" height="398" fill="#afd1fc"/>
<rect x="61.6" y="15.4" width="405.4" height="337.5" fill="#fff"/>
<path d="M61.6 70.9 h8.2 M467 70.9 h-8.2 M61.6 128.0 h8.2 M467 128.0 h-8.2 M61.6 183.2 h8.2 M467 183.2 h-8.2 M61.6 240.4 h8.2 M467 240.4 h-8.2 M61.6 295.6 h8.2 M467 295.6 h-8.2 M141.0 15.4 v7.8 M141.0 352.9 v-7.8 M220.6 15.4 v7.8 M220.6 352.9 v-7.8 M300.2 15.4 v7.8 M300.2 352.9 v-7.8 M379.79999999999995 15.4 v7.8 M379.79999999999995 352.9 v-7.8 M459.4 15.4 v7.8 M459.4 352.9 v-7.8 M459.5 15.4 v7.8 M459.5 352.9 v-7.8" stroke="#111" stroke-width="1.3" fill="none"/>
<path d="M61.6 183.3 H467" stroke="#800080" stroke-width="2.4"/>
<rect x="256.5" y="15.4" width="210.5" height="25.3" fill="#e4effe" fill-opacity="0.88" stroke="#111" stroke-width="1.2"/><path d="M300.2 15.4 v7 M379.79999999999995 15.4 v7 M459.4 15.4 v7 M459.5 15.4 v7 " stroke="#222" stroke-width="1.1" opacity="0.55"/><path d="M263.5 28.200000000000003 L303 28.200000000000003" stroke="#800080" stroke-width="2.4"/><text x="316" y="33.9" class="leg" textLength="141.5" lengthAdjust="spacingAndGlyphs">Time(Block(ch1))</text>
<rect x="61.6" y="15.4" width="405.4" height="337.5" fill="none" stroke="#111" stroke-width="1.4"/>
<text x="38.5" y="74.5" class="tk" text-anchor="middle">1.0</text>
<text x="38.5" y="131.6" class="tk" text-anchor="middle">0.5</text>
<text x="38.5" y="186.8" class="tk" text-anchor="middle">0.0</text>
<text x="38.5" y="244.0" class="tk" text-anchor="middle">-0.5</text>
<text x="38.5" y="299.2" class="tk" text-anchor="middle">-1.0</text>
<text x="38.5" y="346.9" class="tk" text-anchor="middle">-1.5</text>
<text x="63.8" y="372.9" class="tk" text-anchor="start">0.00</text>
<text x="141.0" y="372.9" class="tk" text-anchor="middle">0.05</text>
<text x="220.6" y="372.9" class="tk" text-anchor="middle">0.10</text>
<text x="300.2" y="372.9" class="tk" text-anchor="middle">0.15</text>
<text x="379.79999999999995" y="372.9" class="tk" text-anchor="middle">0.20</text>
<text x="463.5" y="372.9" class="tk" text-anchor="end">0.26</text>
<text x="68.4" y="29.200000000000003" class="ax" textLength="29" lengthAdjust="spacingAndGlyphs">m/s²</text>
<text x="455.5" y="347.29999999999995" class="ax" text-anchor="end" textLength="51.5" lengthAdjust="spacingAndGlyphs">Time (s)</text>
<g transform="translate(2.6,364.1)"><rect x="0.5" y="0.5" width="29.2" height="28.8" rx="3" fill="#c6ddfc" stroke="#e8eff8" stroke-width="1"/>
<rect x="1.4" y="1.4" width="27.4" height="27" rx="2.6" fill="none" stroke="#9db3d1" stroke-width="0.9"/>
<path d="M14.6 3.4 C7 3.4 2.9 8.6 2.9 14.6 C2.9 21.4 7.8 26.8 13.8 26.8 C16.6 26.8 17.7 24.8 16.6 22.8 C15.3 20.4 16.6 18.3 19.2 18.3 L22.2 18.3 C25.2 18.3 26.5 16.3 26.5 13.7 C26.5 7.8 21.1 3.4 14.6 3.4 Z" fill="#6c98bb"/>
<rect x="6.2" y="15" width="2.8" height="2.8" fill="#3f7499"/><rect x="7.6" y="9.2" width="2.8" height="2.8" fill="#3f7499"/><rect x="13.4" y="6.2" width="2.8" height="2.8" fill="#3f7499"/><rect x="19.4" y="9.2" width="2.8" height="2.8" fill="#3f7499"/>
</g>
<path d="M0.8 0 V398 M483.6 0 V398" stroke="#111" stroke-width="1.6"/><path d="M0 0.8 H484.5" stroke="#111" stroke-width="1.5"/><path d="M0 396.25 H484.5" stroke="#111" stroke-width="1.8"/>
</svg>
</div>

<div class="panel" style="left:22px;top:504px;width:655px">
 <div class="tabstrip"></div>
 <svg class="tabsvg" width="172" height="37" viewBox="0 0 172 37">
  <path d="M2.4 37 L2.4 8 Q2.4 3.2 7.5 3.2 L137 3.2 Q143.2 3.4 146.2 8 L160.6 29.6 Q164 35.2 169 35.6 L172 35.6 L172 37 Z" fill="#fff" stroke="#8fa3c8" stroke-width="1.2"/>
  <rect x="0" y="33" width="1.8" height="4" fill="#b9d4fa"/>
  <text x="8" y="24.8" class="tabtitle" textLength="135.5" lengthAdjust="spacingAndGlyphs">(APS(Block(ch1)))</text>
 </svg>
 <svg class="closex" style="left:632px" width="12" height="12" viewBox="0 0 12 12"><path d="M0.8 1.4 L11.2 10.6 M11.2 1.4 L0.8 10.6" stroke="#3b82ea" stroke-width="2.1"/></svg>
 <div class="toolbar"><svg class="ic" style="left:12.5px" width="24" height="24" viewBox="0 0 24 24">
<path d="M2.2 7.6 A7.9 7.9 0 0 1 16 4.6" fill="none" stroke="#0b3e5d" stroke-width="2.9"/>
<path d="M17.9 0.7 L17.9 8.5 L10.3 8.5 Z" fill="#0b3e5d"/>
<path d="M17.4 12.4 A7.9 7.9 0 0 1 3.6 15.4" fill="none" stroke="#0b3e5d" stroke-width="2.9"/>
<path d="M0.6 19 L0.6 11.5 L8.2 11.5 Z" fill="#0b3e5d"/>
<path d="M14.6 14.6 L22.8 23.2" stroke="#0b3e5d" stroke-width="2.7" fill="none"/></svg>
<svg class="ic" style="left:48.5px" width="24" height="24" viewBox="0 0 24 24">
<path d="M1.6 1.6 L10.8 1.6 L1.6 10.8 Z M22.5 22.4 L13.3 22.4 L22.5 13.2 Z" fill="#86a7c2"/>
<path d="M5 5 L19 19" stroke="#86a7c2" stroke-width="4"/>
<path d="M22.5 1.6 L13.3 1.6 L22.5 10.8 Z M1.6 22.4 L10.8 22.4 L1.6 13.2 Z" fill="#0b3e5d"/>
<path d="M19 5 L5 19" stroke="#0b3e5d" stroke-width="4"/></svg>
<div class="sep" style="left:80.7px"></div>
<svg class="ic" style="left:89.0px" width="24" height="24" viewBox="0 0 24 24">
<rect x="0" y="1.3" width="24" height="21" rx="3" fill="#86a7c2"/>
<path d="M0 10.5 L0 4.3 A3 3 0 0 1 3 1.3 L21 1.3 A3 3 0 0 1 24 4.3 L24 10.5 Z" fill="#0b3e5d"/>
<rect x="3.2" y="4.6" width="2.6" height="2.6" fill="#86a7c2"/>
<rect x="7.6" y="4.6" width="13.2" height="2.6" fill="#86a7c2"/></svg>
<svg class="ic" style="left:125.0px" width="24" height="24" viewBox="0 0 24 24">
<path d="M12.2 0.2 L12.2 23.7" stroke="#a9a9a9" stroke-width="3"/>
<rect x="6.3" y="6.1" width="11.8" height="4.6" rx="2.3" fill="#d3e3fa" stroke="#c0cbdb" stroke-width="2.6"/></svg>
<svg class="ic" style="left:161.0px" width="24" height="24" viewBox="0 0 24 24">
<path d="M8 9 L8 23.7" stroke="#a9a9a9" stroke-width="3"/>
<circle cx="8" cy="4" r="3" fill="#d3e3fa" stroke="#c0cbdb" stroke-width="2.4"/>
<path d="M16.6 0.2 L16.6 16" stroke="#a9a9a9" stroke-width="3"/>
<circle cx="16.6" cy="19.6" r="3" fill="#d3e3fa" stroke="#c0cbdb" stroke-width="2.4"/></svg>
<svg class="ic" style="left:197.0px" width="24" height="24" viewBox="0 0 24 24">
<path d="M0.3 12 L11 12 M19 12 L23.9 12" stroke="#0b3e5d" stroke-width="3"/>
<rect x="13.2" y="6.3" width="5.4" height="11.6" rx="2.5" fill="#d3e3fa" stroke="#86a7c2" stroke-width="2.4"/></svg>
<svg class="ic" style="left:233.0px" width="24" height="24" viewBox="0 0 24 24">
<rect x="3.6" y="3.4" width="17.2" height="20.5" rx="1.5" fill="#c3ccd9"/>
<path d="M7.6 0.4 L16.8 0.4 L17.6 2.2 L6.8 2.2 Z" fill="#9e9e9e"/>
<rect x="1.8" y="1.6" width="20.8" height="2.7" rx="0.8" fill="#9e9e9e"/>
<path d="M11.4 8.2 L7.4 11.6 L11.4 15 M7.6 11.6 L13.2 11.6 Q16.4 11.8 16.2 16.8" fill="none" stroke="#9e9e9e" stroke-width="1.9"/></svg>
<div class="sep" style="left:265.2px"></div>
<svg class="ic" style="left:273.5px" width="24" height="24" viewBox="0 0 24 24">
<path d="M12 24 C9 19.5 2.8 14 2.8 9.2 A9.2 9.2 0 0 1 21.2 9.2 C21.2 14 15 19.5 12 24 Z" fill="#9e9e9e"/></svg>
<svg class="ic" style="left:309.5px" width="24" height="24" viewBox="0 0 24 24">
<path d="M1.6 1.6 L1.6 21 L23.4 21" fill="none" stroke="#bccbe2" stroke-width="2.8"/>
<rect x="7.8" y="5.6" width="2.6" height="2.6" fill="#9e9e9e"/>
<rect x="18.2" y="4.6" width="2.6" height="2.6" fill="#9e9e9e"/>
<rect x="12" y="10.6" width="2.6" height="2.6" fill="#9e9e9e"/>
<rect x="6.4" y="13.6" width="2.6" height="2.6" fill="#9e9e9e"/>
<rect x="17" y="13.6" width="2.6" height="2.6" fill="#9e9e9e"/></svg>
<svg class="ic" style="left:345.5px" width="24" height="24" viewBox="0 0 24 24">
<circle cx="12.2" cy="9.3" r="7" fill="#9e9e9e"/>
<path d="M5.3 10.6 L12.3 21.6 L18.6 12.6 Z" fill="#9e9e9e"/>
<path d="M-1 3.9 L22.4 22.2" stroke="#d6e5fb" stroke-width="1.9"/>
<path d="M0.1 2.5 L23.5 20.8" stroke="#9e9e9e" stroke-width="1.8"/></svg>
<svg class="ic" style="left:381.5px" width="24" height="24" viewBox="0 0 24 24">
<ellipse cx="12" cy="11.1" rx="11.9" ry="9.7" fill="#9e9e9e"/>
<path d="M3.6 15 Q3.8 20.4 0 22.3 Q6.6 22.8 11 19 Z" fill="#9e9e9e"/></svg>
<div class="sep" style="left:413.7px"></div>
<svg class="ic" style="left:422.0px" width="24" height="24" viewBox="0 0 24 24">
<rect x="1" y="7.4" width="22" height="8.8" fill="#c3ccd9"/>
<rect x="0" y="6" width="2.6" height="11.8" fill="#a8a8a8"/>
<rect x="21.4" y="6" width="2.6" height="11.8" fill="#a8a8a8"/></svg>
<svg class="ic" style="left:458.0px" width="24" height="24" viewBox="0 0 24 24">
<path d="M4.6 1.6 L23.2 1.6 L18 9 L23.2 16.4 L4.6 16.4 Z" fill="#c3ccd9"/>
<rect x="2" y="0" width="2.9" height="24" fill="#a3a3a3"/></svg>
<svg class="ic" style="left:494.0px" width="24" height="24" viewBox="0 0 24 24">
<path d="M2.6 0 L21.4 0 A2.6 2.6 0 0 1 24 2.6 L24 17 A2.6 2.6 0 0 1 21.4 19.6 L15 19.6 L8.4 24 L8.4 19.6 L2.6 19.6 A2.6 2.6 0 0 1 0 17 L0 2.6 A2.6 2.6 0 0 1 2.6 0 Z" fill="#86a7c2"/>
<path d="M5.6 7.6 L18 7.6 M5.6 12.6 L13 12.6" stroke="#0b3e5d" stroke-width="2.2"/></svg>
<div class="sep" style="left:526.2px"></div>
<svg class="ic" style="left:534.5px" width="24" height="24" viewBox="0 0 24 24">
<path d="M5.6 0 L13 0 L20.8 7.6 L20.8 21.4 A2.4 2.4 0 0 1 18.4 23.8 L5.6 23.8 A2.4 2.4 0 0 1 3.2 21.4 L3.2 2.4 A2.4 2.4 0 0 1 5.6 0 Z" fill="#8ad5b8"/>
<path d="M13 0 L20.8 7.6 L13 7.6 Z" fill="#1fba58"/>
<path d="M8.6 12.2 L15.4 20 M15.4 12.2 L8.6 20" stroke="#27b75c" stroke-width="2"/></svg>
<svg class="ic" style="left:570.5px" width="24" height="24" viewBox="0 0 24 24">
<path d="M0.8 6.4 L0.8 0.8 L6.4 0.8 M17.6 0.8 L23.2 0.8 L23.2 6.4 M23.2 17.6 L23.2 23.2 L17.6 23.2 M6.4 23.2 L0.8 23.2 L0.8 17.6" fill="none" stroke="#86a7c2" stroke-width="1.8"/>
<path d="M6 6.8 L8 6.8 L9.2 4.8 L14.8 4.8 L16 6.8 L18 6.8 A1.6 1.6 0 0 1 19.6 8.4 L19.6 15.8 A1.6 1.6 0 0 1 18 17.4 L6 17.4 A1.6 1.6 0 0 1 4.4 15.8 L4.4 8.4 A1.6 1.6 0 0 1 6 6.8 Z" fill="#0b3e5d"/>
<circle cx="12" cy="12" r="2.8" fill="#fff"/></svg>
<div class="ovf" style="left:624.7px"><svg width="17" height="36" viewBox="0 0 17 36">
<path d="M3.8 7.6 L7.2 10.2 L3.8 12.8 Z M10.2 7.6 L13.6 10.2 L10.2 12.8 Z" fill="#fff"/><path d="M3.2 7 L6.6 9.6 L3.2 12.2 Z M9.6 7 L13 9.6 L9.6 12.2 Z" fill="#111"/>
<path d="M4.6 20.4 L13 20.4" stroke="#fff" stroke-width="1.6"/>
<path d="M4.6 19 L13 19" stroke="#111" stroke-width="1.6"/>
<path d="M4.9 24.6 L13.7 24.6 L9.3 29.2 Z" fill="#fff"/>
<path d="M4.4 23.4 L13.2 23.4 L8.8 27.8 Z" fill="#111"/>
</svg></div></div>
 <svg class="chart" style="left:5px;top:88px" width="645" height="398" viewBox="0 0 645 398">
<rect x="0" y="0" width="645" height="398" fill="#afd1fc"/>
<rect x="67.9" y="14.9" width="560.1" height="337.6" fill="#fff"/>
<path d="M67.9 127.4 h8.2 M628 127.4 h-8.2 M67.9 239.8 h8.2 M628 239.8 h-8.2 M69 14.9 v7.8 M69 352.5 v-7.8 M279.6 14.9 v7.8 M279.6 352.5 v-7.8 M489.3 14.9 v7.8 M489.3 352.5 v-7.8" stroke="#111" stroke-width="1.3" fill="none"/>
<rect x="67.9" y="39" width="411.70000000000005" height="24.8" fill="#fff" stroke="#111" stroke-width="1.2"/>
<rect x="422.1" y="14.9" width="205.89999999999998" height="25.2" fill="#e4effe" fill-opacity="0.88" stroke="#111" stroke-width="1.2"/><path d="M489.3 14.9 v7 " stroke="#222" stroke-width="1.1" opacity="0.55"/><path d="M427.6 27.9 L469.5 27.9" stroke="#800080" stroke-width="2.4"/><text x="481.7" y="33.5" class="leg" textLength="134.8" lengthAdjust="spacingAndGlyphs">APS(Block(ch1))</text>
<rect x="67.9" y="14.9" width="560.1" height="337.6" fill="none" stroke="#111" stroke-width="1.4"/>
<text x="74.2" y="29.3" class="ax" textLength="148.2" lengthAdjust="spacingAndGlyphs">LogMag m/s² (0-peak)</text>
<text x="70" y="54.3" class="rms" textLength="402.5" lengthAdjust="spacingAndGlyphs">APS(Block(ch1)) RMS:0.0000 m/s²   (0.00Hz ~ 499.02Hz)</text>
<rect x="215.8" y="149.6" width="263.2" height="24" fill="#fff" stroke="#111" stroke-width="1.2"/>
<text x="218.5" y="167.6" class="msg" textLength="258.5" lengthAdjust="spacingAndGlyphs">All signals are out of display range</text>
<text x="42.7" y="131.5" class="tk" text-anchor="middle">1</text>
<text x="42.7" y="243.6" class="tk" text-anchor="middle">0.1</text>
<text x="42.7" y="346.1" class="tk" text-anchor="middle">0.01</text>
<text x="70" y="372.1" class="tk" text-anchor="start">1.0</text>
<text x="280" y="372.1" class="tk" text-anchor="middle">10</text>
<text x="489.5" y="372.1" class="tk" text-anchor="middle">100</text>
<text x="627" y="372.1" class="tk" text-anchor="end">449</text>
<text x="616.5" y="347.0" class="ax" text-anchor="end" textLength="95" lengthAdjust="spacingAndGlyphs">Frequency (Hz)</text>
<g transform="translate(2.6,364.1)"><rect x="0.5" y="0.5" width="29.2" height="28.8" rx="3" fill="#c6ddfc" stroke="#e8eff8" stroke-width="1"/>
<rect x="1.4" y="1.4" width="27.4" height="27" rx="2.6" fill="none" stroke="#9db3d1" stroke-width="0.9"/>
<path d="M14.6 3.4 C7 3.4 2.9 8.6 2.9 14.6 C2.9 21.4 7.8 26.8 13.8 26.8 C16.6 26.8 17.7 24.8 16.6 22.8 C15.3 20.4 16.6 18.3 19.2 18.3 L22.2 18.3 C25.2 18.3 26.5 16.3 26.5 13.7 C26.5 7.8 21.1 3.4 14.6 3.4 Z" fill="#6c98bb"/>
<rect x="6.2" y="15" width="2.8" height="2.8" fill="#3f7499"/><rect x="7.6" y="9.2" width="2.8" height="2.8" fill="#3f7499"/><rect x="13.4" y="6.2" width="2.8" height="2.8" fill="#3f7499"/><rect x="19.4" y="9.2" width="2.8" height="2.8" fill="#3f7499"/>
</g>
<path d="M0.8 0 V398 M644.1 0 V398" stroke="#111" stroke-width="1.6"/><path d="M0 0.8 H645" stroke="#111" stroke-width="1.5"/><path d="M0 396.25 H645" stroke="#111" stroke-width="1.8"/>
</svg>
</div>

<div class="panel" style="left:681px;top:504px;width:494px">
 <div class="tabstrip"></div>
 <svg class="tabsvg" width="236.5" height="37" viewBox="0 0 236.5 37">
  <path d="M2.4 37 L2.4 8 Q2.4 3.2 7.5 3.2 L201.5 3.2 Q207.7 3.4 210.7 8 L225.1 29.6 Q228.5 35.2 233.5 35.6 L236.5 35.6 L236.5 37 Z" fill="#fff" stroke="#8fa3c8" stroke-width="1.2"/>
  <rect x="0" y="33" width="1.8" height="4" fill="#b9d4fa"/>
  <text x="8" y="24.8" class="tabtitle" textLength="201.5" lengthAdjust="spacingAndGlyphs">(H(Block(ch2),Block(ch1)))</text>
 </svg>
 <svg class="closex" style="left:471px" width="12" height="12" viewBox="0 0 12 12"><path d="M0.8 1.4 L11.2 10.6 M11.2 1.4 L0.8 10.6" stroke="#3b82ea" stroke-width="2.1"/></svg>
 <div class="toolbar"><svg class="ic" style="left:12.5px" width="24" height="24" viewBox="0 0 24 24">
<path d="M2.2 7.6 A7.9 7.9 0 0 1 16 4.6" fill="none" stroke="#0b3e5d" stroke-width="2.9"/>
<path d="M17.9 0.7 L17.9 8.5 L10.3 8.5 Z" fill="#0b3e5d"/>
<path d="M17.4 12.4 A7.9 7.9 0 0 1 3.6 15.4" fill="none" stroke="#0b3e5d" stroke-width="2.9"/>
<path d="M0.6 19 L0.6 11.5 L8.2 11.5 Z" fill="#0b3e5d"/>
<path d="M14.6 14.6 L22.8 23.2" stroke="#0b3e5d" stroke-width="2.7" fill="none"/></svg>
<svg class="ic" style="left:48.5px" width="24" height="24" viewBox="0 0 24 24">
<path d="M1.6 1.6 L10.8 1.6 L1.6 10.8 Z M22.5 22.4 L13.3 22.4 L22.5 13.2 Z" fill="#86a7c2"/>
<path d="M5 5 L19 19" stroke="#86a7c2" stroke-width="4"/>
<path d="M22.5 1.6 L13.3 1.6 L22.5 10.8 Z M1.6 22.4 L10.8 22.4 L1.6 13.2 Z" fill="#0b3e5d"/>
<path d="M19 5 L5 19" stroke="#0b3e5d" stroke-width="4"/></svg>
<div class="sep" style="left:80.7px"></div>
<svg class="ic" style="left:89.0px" width="24" height="24" viewBox="0 0 24 24">
<rect x="0" y="1.3" width="24" height="21" rx="3" fill="#86a7c2"/>
<path d="M0 10.5 L0 4.3 A3 3 0 0 1 3 1.3 L21 1.3 A3 3 0 0 1 24 4.3 L24 10.5 Z" fill="#0b3e5d"/>
<rect x="3.2" y="4.6" width="2.6" height="2.6" fill="#86a7c2"/>
<rect x="7.6" y="4.6" width="13.2" height="2.6" fill="#86a7c2"/></svg>
<svg class="ic" style="left:125.0px" width="24" height="24" viewBox="0 0 24 24">
<path d="M12.2 0.2 L12.2 23.7" stroke="#a9a9a9" stroke-width="3"/>
<rect x="6.3" y="6.1" width="11.8" height="4.6" rx="2.3" fill="#d3e3fa" stroke="#c0cbdb" stroke-width="2.6"/></svg>
<svg class="ic" style="left:161.0px" width="24" height="24" viewBox="0 0 24 24">
<path d="M8 9 L8 23.7" stroke="#a9a9a9" stroke-width="3"/>
<circle cx="8" cy="4" r="3" fill="#d3e3fa" stroke="#c0cbdb" stroke-width="2.4"/>
<path d="M16.6 0.2 L16.6 16" stroke="#a9a9a9" stroke-width="3"/>
<circle cx="16.6" cy="19.6" r="3" fill="#d3e3fa" stroke="#c0cbdb" stroke-width="2.4"/></svg>
<svg class="ic" style="left:197.0px" width="24" height="24" viewBox="0 0 24 24">
<path d="M0.3 12 L11 12 M19 12 L23.9 12" stroke="#0b3e5d" stroke-width="3"/>
<rect x="13.2" y="6.3" width="5.4" height="11.6" rx="2.5" fill="#d3e3fa" stroke="#86a7c2" stroke-width="2.4"/></svg>
<svg class="ic" style="left:233.0px" width="24" height="24" viewBox="0 0 24 24">
<rect x="3.6" y="3.4" width="17.2" height="20.5" rx="1.5" fill="#c3ccd9"/>
<path d="M7.6 0.4 L16.8 0.4 L17.6 2.2 L6.8 2.2 Z" fill="#9e9e9e"/>
<rect x="1.8" y="1.6" width="20.8" height="2.7" rx="0.8" fill="#9e9e9e"/>
<path d="M11.4 8.2 L7.4 11.6 L11.4 15 M7.6 11.6 L13.2 11.6 Q16.4 11.8 16.2 16.8" fill="none" stroke="#9e9e9e" stroke-width="1.9"/></svg>
<div class="sep" style="left:265.2px"></div>
<svg class="ic" style="left:273.5px" width="24" height="24" viewBox="0 0 24 24">
<path d="M12 24 C9 19.5 2.8 14 2.8 9.2 A9.2 9.2 0 0 1 21.2 9.2 C21.2 14 15 19.5 12 24 Z" fill="#9e9e9e"/></svg>
<svg class="ic" style="left:309.5px" width="24" height="24" viewBox="0 0 24 24">
<path d="M1.6 1.6 L1.6 21 L23.4 21" fill="none" stroke="#bccbe2" stroke-width="2.8"/>
<rect x="7.8" y="5.6" width="2.6" height="2.6" fill="#9e9e9e"/>
<rect x="18.2" y="4.6" width="2.6" height="2.6" fill="#9e9e9e"/>
<rect x="12" y="10.6" width="2.6" height="2.6" fill="#9e9e9e"/>
<rect x="6.4" y="13.6" width="2.6" height="2.6" fill="#9e9e9e"/>
<rect x="17" y="13.6" width="2.6" height="2.6" fill="#9e9e9e"/></svg>
<svg class="ic" style="left:345.5px" width="24" height="24" viewBox="0 0 24 24">
<circle cx="12.2" cy="9.3" r="7" fill="#9e9e9e"/>
<path d="M5.3 10.6 L12.3 21.6 L18.6 12.6 Z" fill="#9e9e9e"/>
<path d="M-1 3.9 L22.4 22.2" stroke="#d6e5fb" stroke-width="1.9"/>
<path d="M0.1 2.5 L23.5 20.8" stroke="#9e9e9e" stroke-width="1.8"/></svg>
<svg class="ic" style="left:381.5px" width="24" height="24" viewBox="0 0 24 24">
<ellipse cx="12" cy="11.1" rx="11.9" ry="9.7" fill="#9e9e9e"/>
<path d="M3.6 15 Q3.8 20.4 0 22.3 Q6.6 22.8 11 19 Z" fill="#9e9e9e"/></svg>
<div class="sep" style="left:413.7px"></div>
<svg class="ic" style="left:422.0px" width="24" height="24" viewBox="0 0 24 24">
<rect x="1" y="7.4" width="22" height="8.8" fill="#c3ccd9"/>
<rect x="0" y="6" width="2.6" height="11.8" fill="#a8a8a8"/>
<rect x="21.4" y="6" width="2.6" height="11.8" fill="#a8a8a8"/></svg>
<div class="ovf" style="left:463.7px"><svg width="17" height="36" viewBox="0 0 17 36">
<path d="M3.8 7.6 L7.2 10.2 L3.8 12.8 Z M10.2 7.6 L13.6 10.2 L10.2 12.8 Z" fill="#fff"/><path d="M3.2 7 L6.6 9.6 L3.2 12.2 Z M9.6 7 L13 9.6 L9.6 12.2 Z" fill="#111"/>
<path d="M4.6 20.4 L13 20.4" stroke="#fff" stroke-width="1.6"/>
<path d="M4.6 19 L13 19" stroke="#111" stroke-width="1.6"/>
<path d="M4.9 24.6 L13.7 24.6 L9.3 29.2 Z" fill="#fff"/>
<path d="M4.4 23.4 L13.2 23.4 L8.8 27.8 Z" fill="#111"/>
</svg></div></div>
 <svg class="chart" style="left:5px;top:88px" width="484.5" height="398" viewBox="0 0 484.5 398">
<rect x="0" y="0" width="484.5" height="398" fill="#afd1fc"/>
<rect x="67.9" y="14.5" width="393.70000000000005" height="175.7" fill="#fff"/>
<rect x="67.9" y="213" width="393.70000000000005" height="139.2" fill="#fff"/>
<path d="M67.9 73.5 h8.2 M461.6 73.5 h-8.2 M67.9 132.3 h8.2 M461.6 132.3 h-8.2 M69 14.5 v6.5 M69 190.2 v-6.5 M218 14.5 v6.5 M218 190.2 v-6.5 M366 14.5 v6.5 M366 190.2 v-6.5" stroke="#111" stroke-width="1.3" fill="none"/>
<path d="M67.9 240.7 h8.2 M461.6 240.7 h-8.2 M67.9 254.75 h8.2 M461.6 254.75 h-8.2 M67.9 268.8 h8.2 M461.6 268.8 h-8.2 M67.9 282.85 h8.2 M461.6 282.85 h-8.2 M67.9 296.9 h8.2 M461.6 296.9 h-8.2 M67.9 310.95 h8.2 M461.6 310.95 h-8.2 M67.9 325.0 h8.2 M461.6 325.0 h-8.2 M67.9 339.05 h8.2 M461.6 339.05 h-8.2 M69 213 v6.5 M69 352.2 v-6.5 M218 213 v6.5 M218 352.2 v-6.5 M366 213 v6.5 M366 352.2 v-6.5" stroke="#111" stroke-width="1.3" fill="none"/>
<path d="M67.9 283.1 H461.6" stroke="#0000f0" stroke-width="2.4"/>
<text x="75.6" y="28.7" class="ax2" textLength="143" lengthAdjust="spacingAndGlyphs">LogMag (m/s²)/(m/s²)</text>
<text x="75.4" y="228" class="ax2" textLength="97" lengthAdjust="spacingAndGlyphs">Phase (Degree)</text>
<rect x="187.5" y="14.5" width="274.1" height="25.6" fill="#e4effe" fill-opacity="0.88" stroke="#111" stroke-width="1.2"/><path d="M218 14.5 v7 M366 14.5 v7 " stroke="#222" stroke-width="1.1" opacity="0.55"/><path d="M194 27.4 L234 27.4" stroke="#0000f0" stroke-width="2.4"/><text x="247" y="33.7" class="leg" textLength="204" lengthAdjust="spacingAndGlyphs">H(Block(ch2),Block(ch1))</text>
<rect x="187.5" y="213" width="274.1" height="25.2" fill="#e4effe" fill-opacity="0.88" stroke="#111" stroke-width="1.2"/><path d="M218 213 v7 M366 213 v7 " stroke="#222" stroke-width="1.1" opacity="0.55"/><path d="M194 226 L234 226" stroke="#0000f0" stroke-width="2.4"/><text x="247" y="232.4" class="leg" textLength="204" lengthAdjust="spacingAndGlyphs">H(Block(ch2),Block(ch1))</text>
<rect x="67.9" y="14.5" width="393.70000000000005" height="175.7" fill="none" stroke="#111" stroke-width="1.4"/>
<rect x="67.9" y="213" width="393.70000000000005" height="139.2" fill="none" stroke="#111" stroke-width="1.4"/>
<rect x="133.6" y="85.7" width="263.4" height="23" fill="#fff" stroke="#111" stroke-width="1.2"/>
<text x="136" y="103.2" class="msg" textLength="258.5" lengthAdjust="spacingAndGlyphs">All signals are out of display range</text>
<text x="43.5" y="76.6" class="tk" text-anchor="middle">1</text>
<text x="43.5" y="135.6" class="tk" text-anchor="middle">0.1</text>
<text x="43.5" y="185.9" class="tk" text-anchor="middle">0.01</text>
<text x="43.5" y="259.0" class="tk" text-anchor="middle">90</text>
<text x="43.5" y="286.4" class="tk" text-anchor="middle">0</text>
<text x="43.5" y="314.7" class="tk" text-anchor="middle">-90</text>
<text x="43.5" y="341.8" class="tk" text-anchor="middle">-180</text>
<text x="72" y="375.4" class="tk" text-anchor="start" textLength="18.1" lengthAdjust="spacingAndGlyphs">1.0</text>
<text x="218" y="375.4" class="tk" text-anchor="middle" textLength="15.5" lengthAdjust="spacingAndGlyphs">10</text>
<text x="366" y="375.4" class="tk" text-anchor="middle" textLength="23.2" lengthAdjust="spacingAndGlyphs">100</text>
<text x="459.5" y="375.4" class="tk" text-anchor="end" textLength="23.2" lengthAdjust="spacingAndGlyphs">449</text>
<text x="451.0" y="183.89999999999998" class="ax2" text-anchor="end" textLength="95.3" lengthAdjust="spacingAndGlyphs">Frequency (Hz)</text>
<text x="451.0" y="346.9" class="ax2" text-anchor="end" textLength="95.3" lengthAdjust="spacingAndGlyphs">Frequency (Hz)</text>
<path d="M0 197 H484.5" stroke="#111" stroke-width="2.6"/>
<g transform="translate(2.6,364.1)"><rect x="0.5" y="0.5" width="29.2" height="28.8" rx="3" fill="#c6ddfc" stroke="#e8eff8" stroke-width="1"/>
<rect x="1.4" y="1.4" width="27.4" height="27" rx="2.6" fill="none" stroke="#9db3d1" stroke-width="0.9"/>
<path d="M14.6 3.4 C7 3.4 2.9 8.6 2.9 14.6 C2.9 21.4 7.8 26.8 13.8 26.8 C16.6 26.8 17.7 24.8 16.6 22.8 C15.3 20.4 16.6 18.3 19.2 18.3 L22.2 18.3 C25.2 18.3 26.5 16.3 26.5 13.7 C26.5 7.8 21.1 3.4 14.6 3.4 Z" fill="#6c98bb"/>
<rect x="6.2" y="15" width="2.8" height="2.8" fill="#3f7499"/><rect x="7.6" y="9.2" width="2.8" height="2.8" fill="#3f7499"/><rect x="13.4" y="6.2" width="2.8" height="2.8" fill="#3f7499"/><rect x="19.4" y="9.2" width="2.8" height="2.8" fill="#3f7499"/>
</g>
<path d="M0.8 0 V398 M483.6 0 V398" stroke="#111" stroke-width="1.6"/><path d="M0 0.8 H484.5" stroke="#111" stroke-width="1.5"/><path d="M0 396.25 H484.5" stroke="#111" stroke-width="1.8"/>
</svg>
</div>
</body></html>
